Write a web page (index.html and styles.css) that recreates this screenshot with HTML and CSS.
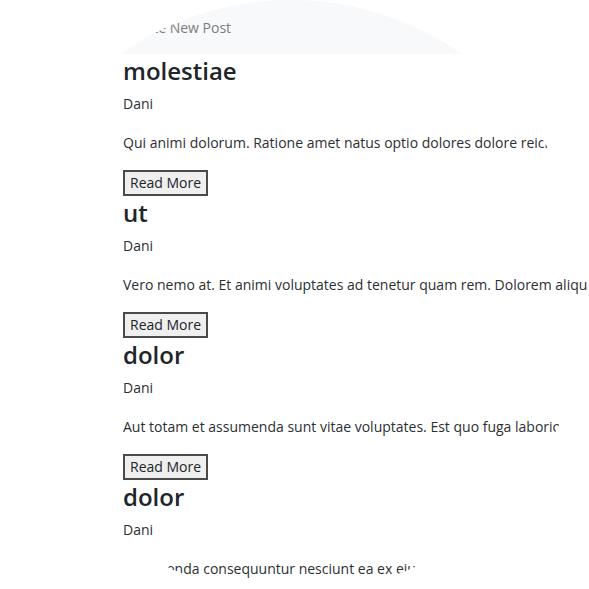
FILE: index.html
```html
<!DOCTYPE html>
<html lang="en">
<head>
<meta charset="utf-8">
<title>Posts</title>
<link rel="stylesheet" href="styles.css">
</head>
<body>
<div class="lens">
  <nav class="navbar">
    <a class="nav-link" href="#">Create New Post</a>
  </nav>
  <main class="posts">
    <article class="post">
      <h2 class="post-title">molestiae</h2>
      <p class="post-author">Dani</p>
      <p class="post-body">Qui animi dolorum. Ratione amet natus optio dolores dolore reiciendis. Quia sint aut et.</p>
      <button class="read-more">Read More</button>
    </article>
    <article class="post">
      <h2 class="post-title">ut</h2>
      <p class="post-author">Dani</p>
      <p class="post-body">Vero nemo at. Et animi voluptates ad tenetur quam rem. Dolorem aliquam sit qui.</p>
      <button class="read-more">Read More</button>
    </article>
    <article class="post">
      <h2 class="post-title">dolor</h2>
      <p class="post-author">Dani</p>
      <p class="post-body">Aut totam et assumenda sunt vitae voluptates. Est quo fuga laboriosam et.</p>
      <button class="read-more">Read More</button>
    </article>
    <article class="post">
      <h2 class="post-title">dolor</h2>
      <p class="post-author">Dani</p>
      <p class="post-body">Assumenda consequuntur nesciunt ea ex eius. Ut quia id.</p>
      <button class="read-more">Read More</button>
    </article>
  </main>
</div>
</body>
</html>
```
FILE: styles.css
```css
html, body {
  margin: 0;
  padding: 0;
  background: #ffffff;
}
body {
  width: 589px;
  height: 589px;
  overflow: hidden;
  font-family: "Open Sans", "Noto Sans", sans-serif;
  color: #212529;
}
.lens {
  width: 589px;
  height: 589px;
  overflow: hidden;
  clip-path: circle(297px at 291px 297px);
}
.navbar {
  height: 54px;
  background: #f8f9fa;
  display: flex;
  align-items: center;
  padding-left: 123px;
}
.nav-link {
  font-size: 14px;
  color: #7b7d80;
  text-decoration: none;
}
.posts {
  padding-left: 123px;
  display: flex;
  flex-direction: column;
}
.post {
  display: flex;
  flex-direction: column;
  align-items: flex-start;
}
.post-title {
  margin: 0 0 4px;
  font-size: 24px;
  font-weight: 600;
  line-height: 34px;
  color: #212529;
}
.post-author,
.post-body {
  margin: 0 0 15px;
  font-size: 14px;
  line-height: 24px;
  white-space: nowrap;
  color: #2b2f33;
}
.read-more {
  font-family: "Open Sans", "Noto Sans", sans-serif;
  font-size: 14px;
  color: #212529;
  background: #efefef;
  border: 2px solid #4a4a4a;
  padding: 1px 5px;
  height: 26px;
  line-height: 20px;
}
```
